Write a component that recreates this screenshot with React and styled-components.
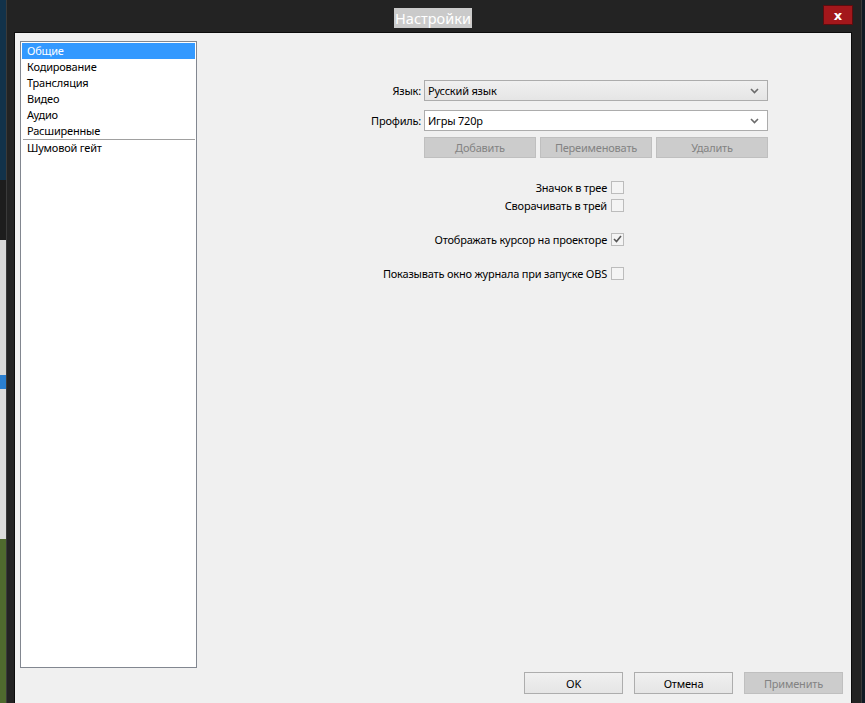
import React from 'react';
import styled, { createGlobalStyle, css } from 'styled-components';

const GlobalStyle = createGlobalStyle`
    html, body {
        margin: 0;
        padding: 0;
        background: #0f1b26;
    }
    * {
        box-sizing: border-box;
    }
`;

const Screen = styled.div`
    display: flex;
    width: 865px;
    height: 703px;
    overflow: hidden;
    font-family: "Noto Sans", "Liberation Sans", sans-serif;
    font-size: 11px;
    letter-spacing: -0.2px;
    color: #000;
`;

const DesktopStrip = styled.div`
    display: flex;
    flex-direction: column;
    width: ${props => props.width}px;
    flex-shrink: 0;
`;

const DesktopBit = styled.div`
    height: ${props => props.height}px;
    background: ${props => props.color};
    flex-shrink: 0;
`;

const Window = styled.div`
    display: flex;
    flex-direction: column;
    width: 856px;
    flex-shrink: 0;
    background: #232323;
    border-left: 1px solid #3a3a3a;
    border-right: 1px solid #3a3a3a;
    padding: 0 9px 0 7px;
`;

const TitleBar = styled.div`
    display: grid;
    grid-template-columns: 1fr auto 1fr;
    align-items: start;
    height: 32px;
    flex-shrink: 0;
`;

const Title = styled.div`
    grid-column: 2;
    margin-top: 8px;
    padding: 0 1px;
    height: 20px;
    line-height: 20px;
    background: #cacaca;
    color: #fff;
    font-size: 14.5px;
    letter-spacing: 0;
`;

const CloseButton = styled.div`
    grid-column: 3;
    justify-self: end;
    display: flex;
    align-items: center;
    justify-content: center;
    width: 30px;
    height: 20px;
    margin-top: 5px;
    margin-right: -1px;
    background: #a3171b;
    border: 1px solid #5a0d0f;
    color: #fff;
    font-size: 13px;
    font-weight: bold;
    font-family: "DejaVu Sans", sans-serif;
    letter-spacing: 0;
`;

const Content = styled.div`
    flex: 1;
    display: flex;
    flex-direction: column;
    background: #f0f0f0;
    border: 1px solid #0c0c0c;
    border-bottom: none;
    padding: 8px 8px 0 5px;
`;

const Body = styled.div`
    display: flex;
    height: 627px;
    flex-shrink: 0;
`;

const PageList = styled.div`
    width: 177px;
    flex-shrink: 0;
    background: #fff;
    border: 1px solid #828790;
    padding: 1px;
`;

const PageItem = styled.div`
    height: 16px;
    line-height: 16px;
    padding-left: 5px;
    white-space: nowrap;
    ${props => props.selected && css`
        background: #3399ff;
        color: #fff;
    `}
`;

const ListSeparator = styled.div`
    height: 1px;
    margin: 0 0 0 1px;
    background: #a0a0a0;
`;

const FormPanel = styled.div`
    flex: 1;
    padding: 39px 0 0 24px;
`;

const FormGrid = styled.div`
    display: grid;
    grid-template-columns: 200px 344px;
    column-gap: 3px;
    row-gap: 9px;
    align-items: center;
`;

const Label = styled.div`
    text-align: right;
    white-space: nowrap;
`;

const Combo = styled.div`
    display: flex;
    align-items: center;
    justify-content: space-between;
    height: 21px;
    padding: 0 8px 0 3px;
    border: 1px solid #acacac;
    background: ${props => props.editable ? '#fff' : 'linear-gradient(#f0f0f0, #e5e5e5)'};
`;

const ButtonRow = styled.div`
    grid-column: 2;
    display: grid;
    grid-template-columns: repeat(3, 1fr);
    column-gap: 4px;
    margin-top: -3px;
`;

const Button = styled.div`
    display: flex;
    align-items: center;
    justify-content: center;
    height: ${props => props.tall ? 22 : 21}px;
    border: 1px solid ${props => props.disabled ? '#bfbfbf' : '#adadad'};
    background: ${props => props.disabled ? '#cccccc' : 'linear-gradient(#f0f0f0, #e5e5e5)'};
    color: ${props => props.disabled ? '#838383' : '#000'};
    white-space: nowrap;
`;

const CheckList = styled.div`
    display: flex;
    flex-direction: column;
    align-items: flex-end;
    width: 403px;
    margin-top: 20px;
`;

const CheckRow = styled.div`
    display: flex;
    align-items: center;
    gap: 4px;
    height: 18px;
    margin-top: ${props => props.spaced ? 16 : 0}px;
    white-space: nowrap;
`;

const Box = styled.div`
    display: flex;
    align-items: center;
    justify-content: center;
    width: 13px;
    height: 13px;
    border: 1px solid #bcbcbc;
    background: #f4f4f4;
`;

const Footer = styled.div`
    display: flex;
    justify-content: flex-end;
    gap: 11px;
    margin-top: 4px;
`;

const FooterButton = styled(Button)`
    width: 99px;
`;

const Chevron = () =>
    <svg width="9" height="6" viewBox="0 0 9 6">
        <path d="M1 1 L4.5 4.5 L8 1" fill="none" stroke="#6b6b6b" strokeWidth="1.6" />
    </svg>;

const Check = () =>
    <svg width="9" height="8" viewBox="0 0 9 8">
        <path d="M1 4 L3.5 6.5 L8 1" fill="none" stroke="#555" strokeWidth="1.6" />
    </svg>;

const pages = ['Общие', 'Кодирование', 'Трансляция', 'Видео', 'Аудио', 'Расширенные'];

const checks = [
    { text: 'Значок в трее' },
    { text: 'Сворачивать в трей' },
    { text: 'Отображать курсор на проекторе', checked: true, spaced: true },
    { text: 'Показывать окно журнала при запуске OBS', spaced: true },
];

const App = () =>
    <>
        <GlobalStyle />
        <Screen>
            <DesktopStrip width={6}>
                <DesktopBit height={180} color="#12324a" />
                <DesktopBit height={60} color="#1d1d1d" />
                <DesktopBit height={135} color="#d9d9d9" />
                <DesktopBit height={14} color="#2a7fd0" />
                <DesktopBit height={150} color="#dcdcdc" />
                <DesktopBit height={164} color="#4f6a2e" />
            </DesktopStrip>
            <Window>
                <TitleBar>
                    <Title>{'Настройки'}</Title>
                    <CloseButton>{'x'}</CloseButton>
                </TitleBar>
                <Content>
                    <Body>
                        <PageList>
                            {pages.map((page, i) =>
                                <PageItem key={page} selected={i === 0}>{page}</PageItem>
                            )}
                            <ListSeparator />
                            <PageItem>{'Шумовой гейт'}</PageItem>
                        </PageList>
                        <FormPanel>
                            <FormGrid>
                                <Label>{'Язык:'}</Label>
                                <Combo>
                                    <span>{'Русский язык'}</span>
                                    <Chevron />
                                </Combo>
                                <Label>{'Профиль:'}</Label>
                                <Combo editable>
                                    <span>{'Игры 720p'}</span>
                                    <Chevron />
                                </Combo>
                                <ButtonRow>
                                    <Button disabled>{'Добавить'}</Button>
                                    <Button disabled>{'Переименовать'}</Button>
                                    <Button disabled>{'Удалить'}</Button>
                                </ButtonRow>
                            </FormGrid>
                            <CheckList>
                                {checks.map(item =>
                                    <CheckRow key={item.text} spaced={item.spaced}>
                                        <span>{item.text}</span>
                                        <Box>{item.checked && <Check />}</Box>
                                    </CheckRow>
                                )}
                            </CheckList>
                        </FormPanel>
                    </Body>
                    <Footer>
                        <FooterButton tall>{'OK'}</FooterButton>
                        <FooterButton tall>{'Отмена'}</FooterButton>
                        <FooterButton tall disabled>{'Применить'}</FooterButton>
                    </Footer>
                </Content>
            </Window>
            <DesktopStrip width={3}>
                <DesktopBit height={703} color="#101a24" />
            </DesktopStrip>
        </Screen>
    </>;

export default App;
